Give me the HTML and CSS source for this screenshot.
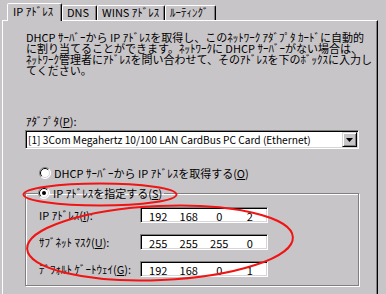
FILE: index.html
```html
<!DOCTYPE html>
<html lang="ja">
<head>
<meta charset="utf-8">
<link rel="stylesheet" href="styles.css">
</head>
<body>
<div class="dlg">
  <div class="tabs">
    <div class="tab sel t1">IP ｱﾄﾞﾚｽ</div>
    <div class="tab t2">DNS</div>
    <div class="tab t3">WINS ｱﾄﾞﾚｽ</div>
    <div class="tab t4">ﾙｰﾃｨﾝｸﾞ</div>
  </div>
  <div class="panel">
    <p class="desc">DHCP ｻｰﾊﾞｰから IP ｱﾄﾞﾚｽを取得し、このﾈｯﾄﾜｰｸ ｱﾀﾞﾌﾟﾀ ｶｰﾄﾞに自動的<br>に割り当てることができます。ﾈｯﾄﾜｰｸに DHCP ｻｰﾊﾞｰがない場合は、<br>ﾈｯﾄﾜｰｸ管理者にｱﾄﾞﾚｽを問い合わせて、そのｱﾄﾞﾚｽを下のﾎﾞｯｸｽに入力し<br>てください。</p>
    <div class="lbl">ｱﾀﾞﾌﾟﾀ(<u>P</u>):</div>
    <div class="combo">
      <span class="ctext">[1] 3Com Megahertz 10/100 LAN CardBus PC Card (Ethernet)</span>
      <span class="cbtn"><svg width="7" height="4" viewBox="0 0 7 4"><path d="M0 0H7L3.5 4Z" fill="#000"/></svg></span>
    </div>
    <div class="radio">
      <svg class="rb" width="12" height="12" viewBox="0 0 12 12"><circle cx="6" cy="6" r="5.5" fill="#fff"/><path d="M9.9 2.1A5.5 5.5 0 0 0 2.1 9.9" stroke="#808080" fill="none"/><path d="M2.1 9.9A5.5 5.5 0 0 0 9.9 2.1" stroke="#fff" fill="none"/><path d="M9.2 2.8A4.5 4.5 0 0 0 2.8 9.2" stroke="#000" fill="none"/><path d="M2.8 9.2A4.5 4.5 0 0 0 9.2 2.8" stroke="#d8d5d8" fill="none"/></svg>
      <span>DHCP ｻｰﾊﾞｰから IP ｱﾄﾞﾚｽを取得する(<u>O</u>)</span>
    </div>
    <fieldset class="grp">
      <legend class="radio leg">
        <svg class="rb" width="12" height="12" viewBox="0 0 12 12"><circle cx="6" cy="6" r="5.5" fill="#fff"/><path d="M9.9 2.1A5.5 5.5 0 0 0 2.1 9.9" stroke="#808080" fill="none"/><path d="M2.1 9.9A5.5 5.5 0 0 0 9.9 2.1" stroke="#fff" fill="none"/><path d="M9.2 2.8A4.5 4.5 0 0 0 2.8 9.2" stroke="#000" fill="none"/><path d="M2.8 9.2A4.5 4.5 0 0 0 9.2 2.8" stroke="#d8d5d8" fill="none"/><circle cx="6" cy="6" r="2" fill="#000"/></svg>
        <span>IP ｱﾄﾞﾚｽを指定する(<u>S</u>)</span>
      </legend>
      <div class="rows">
        <span class="rl">IP ｱﾄﾞﾚｽ(<u>I</u>):</span>
        <div class="ip"><span>192</span><span>168</span><span>0</span><span>2</span></div>
        <span class="rl">ｻﾌﾞﾈｯﾄ ﾏｽｸ(<u>U</u>):</span>
        <div class="ip"><span>255</span><span>255</span><span>255</span><span>0</span></div>
        <span class="rl">ﾃﾞﾌｫﾙﾄ ｹﾞｰﾄｳｪｲ(<u>G</u>):</span>
        <div class="ip"><span>192</span><span>168</span><span>0</span><span>1</span></div>
      </div>
    </fieldset>
  </div>
  <svg class="marks" width="386" height="294" viewBox="0 0 386 294">
    <ellipse cx="100" cy="194.5" rx="76.5" ry="11" fill="none" stroke="#f01414" stroke-width="2"/>
    <ellipse cx="160" cy="243" rx="133" ry="37" transform="rotate(-2.5 160 243)" fill="none" stroke="#f01414" stroke-width="2"/>
  </svg>
</div>
</body>
</html>
```
FILE: styles.css
```css
html, body {
  margin: 0;
  padding: 0;
}
body {
  background: #c8c5c8;
  color: #000;
  font-family: "Noto Sans CJK JP", "Noto Sans", sans-serif;
  font-size: 11px;
  width: 386px;
  height: 294px;
  overflow: hidden;
}
.dlg {
  position: relative;
  height: 294px;
  padding-top: 3px;
  box-sizing: border-box;
}
.tabs {
  display: flex;
  align-items: flex-end;
  height: 17px;
  padding-left: 7px;
}
.tab {
  box-sizing: border-box;
  height: 15px;
  line-height: 13px;
  border: 1px solid;
  border-bottom: none;
  border-color: #fff #000 transparent #fff;
  box-shadow: inset -1px 0 0 #808080;
  border-radius: 2px 2px 0 0;
  padding-left: 4px;
  white-space: nowrap;
}
.tab.sel {
  height: 18px;
  line-height: 15px;
  margin-bottom: -1px;
  position: relative;
  z-index: 1;
  background: #c8c5c8;
  padding-left: 5px;
}
.t1 { width: 55px; }
.t2 { width: 35px; }
.t3 { width: 68px; }
.t4 { width: 51px; }
.panel {
  box-sizing: border-box;
  margin-left: 2px;
  width: 376px;
  height: 274px;
  border: 1px solid;
  border-bottom: none;
  border-color: #fff #000 #000 #fff;
  box-shadow: inset -1px 0 0 #808080;
  padding: 11px 0 0 0;
}
.desc {
  margin: 0 0 0 23px;
  line-height: 11px;
  white-space: nowrap;
}
.lbl {
  margin: 40px 0 0 23px;
  line-height: 11px;
}
.combo {
  box-sizing: border-box;
  margin: 3px 0 0 22px;
  width: 334px;
  height: 19px;
  background: #fff;
  border: 1px solid;
  border-color: #808080 #fff #fff #808080;
  box-shadow: inset 1px 1px 0 #000, inset -1px -1px 0 #d8d5d8;
  display: flex;
  align-items: center;
  justify-content: space-between;
  padding: 1px 1px 1px 2px;
}
.ctext {
  white-space: nowrap;
  font-size: 10.2px;
  line-height: 13px;
}
.cbtn {
  box-sizing: border-box;
  width: 15px;
  height: 15px;
  background: #c8c5c8;
  border: 1px solid;
  border-color: #d8d5d8 #000 #000 #d8d5d8;
  box-shadow: inset 1px 1px 0 #fff, inset -1px -1px 0 #808080;
  display: flex;
  align-items: center;
  justify-content: center;
}
.radio {
  display: flex;
  align-items: center;
  gap: 3px;
  height: 12px;
  line-height: 12px;
  margin: 18px 0 0 36px;
  white-space: nowrap;
}
.rb {
  flex: none;
}
.grp {
  box-sizing: border-box;
  margin: 8px 0 0 22px;
  width: 334px;
  padding: 8px 0 8px 13px;
  border: 1px solid #808080;
  box-shadow: 1px 1px 0 #fff, inset 1px 1px 0 #fff;
  min-width: 0;
}
.leg {
  margin: 0 0 0 -1px;
  padding: 0 2px 0 0;
}
.rows {
  display: grid;
  grid-template-columns: 101px 128px;
  row-gap: 11px;
  align-items: center;
}
.rl {
  white-space: nowrap;
  line-height: 12px;
}
.ip {
  box-sizing: border-box;
  height: 16px;
  background: #fff;
  border: 1px solid;
  border-color: #808080 #fff #fff #808080;
  box-shadow: inset 1px 1px 0 #000, inset -1px -1px 0 #d8d5d8;
  display: flex;
  align-items: center;
  padding: 1px 2px 0 2px;
}
.ip span {
  flex: 1;
  text-align: center;
  line-height: 12px;
}
.marks {
  position: absolute;
  left: 0;
  top: 0;
  pointer-events: none;
}
```
